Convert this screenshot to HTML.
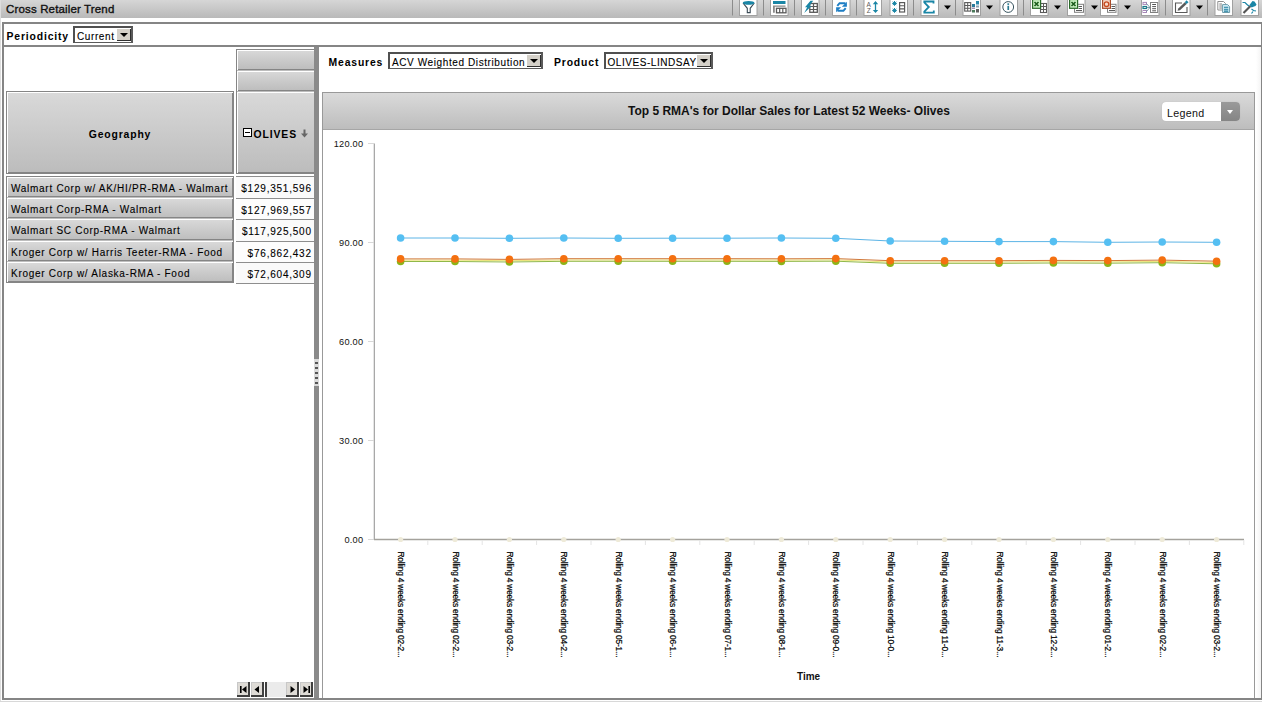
<!DOCTYPE html>
<html><head><meta charset="utf-8"><style>
*{box-sizing:border-box;margin:0;padding:0}
html,body{width:1262px;height:702px;overflow:hidden;background:#fff;font-family:"Liberation Sans",sans-serif;color:#000}
.a{position:absolute}
#title{left:0;top:0;width:1262px;height:17.6px;background:linear-gradient(#d6d6d6,#b9b9b9)}
#ttl{left:6px;top:3px;font-size:11.5px;letter-spacing:0.15px;color:#111;white-space:nowrap;-webkit-text-stroke:0.35px #111}
#lstrip{left:0;top:0;width:1px;height:702px;background:#dedede}
#frame{left:2px;top:22px;width:1260px;height:678px;border:2px solid #858585;border-right:1px solid #858585}
#perbot{left:4px;top:45px;width:1257px;height:2px;background:#858585}
.lbl{font-weight:bold;font-size:10.4px;letter-spacing:0.85px;white-space:nowrap;color:#000}
.sel{background:#fff;border:2px solid #505050;border-right-color:#5a5a5a;border-bottom:1.4px solid #5a5a5a}
.sel .t{position:absolute;left:2px;top:2.6px;font-size:10px;letter-spacing:0.6px;white-space:nowrap;color:#000;-webkit-text-stroke:0.1px #000}
.sel .b{position:absolute;top:0px;right:0px;width:15px;height:13px;background:#d4d0c8;border-left:1px solid #fff;border-top:1px solid #fff;box-shadow:inset -1px -1px 0 #303030}
.sel .b:after{content:"";position:absolute;left:3px;top:4px;border-left:4px solid transparent;border-right:4px solid transparent;border-top:4px solid #000}
#splitter{left:314px;top:47px;width:5px;height:651px;background:#8a8a8a}
.hc{background:linear-gradient(#d9d9d9,#bcbcbc);border:1px solid #858585;box-shadow:inset 1px 1px 0 #fff,inset -1px -1px 0 #858585}
.rc{background:linear-gradient(#dadada,#bdbdbd);border:1px solid #858585;box-shadow:inset 1px 1px 0 #fff,inset -1px -1px 0 #858585;font-size:10px;letter-spacing:0.72px;white-space:nowrap;color:#000;padding-left:4px;line-height:24px;-webkit-text-stroke:0.1px #000}
.vc{border-top:1px solid #8e8e8e;font-size:10px;letter-spacing:0.78px;white-space:nowrap;color:#000;text-align:right;padding-right:2.2px;line-height:23px;-webkit-text-stroke:0.1px #000}
</style></head><body>
<div id="title" class="a"></div>
<div id="ttl" class="a">Cross Retailer Trend</div>
<div id="lstrip" class="a"></div>
<svg class="a" style="left:0;top:0" width="1262" height="17" viewBox="0 0 1262 17"><line x1="732.5" y1="0" x2="732.5" y2="15.5" stroke="#8c8c8c" stroke-width="1"/><line x1="763.5" y1="0" x2="763.5" y2="15.5" stroke="#8c8c8c" stroke-width="1"/><line x1="794.5" y1="0" x2="794.5" y2="15.5" stroke="#8c8c8c" stroke-width="1"/><line x1="825.5" y1="0" x2="825.5" y2="15.5" stroke="#8c8c8c" stroke-width="1"/><line x1="856.5" y1="0" x2="856.5" y2="15.5" stroke="#8c8c8c" stroke-width="1"/><line x1="913.5" y1="0" x2="913.5" y2="15.5" stroke="#8c8c8c" stroke-width="1"/><line x1="955.5" y1="0" x2="955.5" y2="15.5" stroke="#8c8c8c" stroke-width="1"/><line x1="1023.5" y1="0" x2="1023.5" y2="15.5" stroke="#8c8c8c" stroke-width="1"/><line x1="1165.5" y1="0" x2="1165.5" y2="15.5" stroke="#8c8c8c" stroke-width="1"/><line x1="1207.5" y1="0" x2="1207.5" y2="15.5" stroke="#8c8c8c" stroke-width="1"/><rect x="739.5" y="-1" width="17.5" height="16.5" fill="#fff" stroke="#a0a0a0" stroke-width="1"/><rect x="770.5" y="-1" width="17.5" height="16.5" fill="#fff" stroke="#a0a0a0" stroke-width="1"/><rect x="801.5" y="-1" width="17.5" height="16.5" fill="#fff" stroke="#a0a0a0" stroke-width="1"/><rect x="832.5" y="-1" width="17.5" height="16.5" fill="#fff" stroke="#a0a0a0" stroke-width="1"/><rect x="864.0" y="-1" width="17.5" height="16.5" fill="#fff" stroke="#a0a0a0" stroke-width="1"/><rect x="890.0" y="-1" width="17.5" height="16.5" fill="#fff" stroke="#a0a0a0" stroke-width="1"/><rect x="921.0" y="-1" width="17.5" height="16.5" fill="#fff" stroke="#a0a0a0" stroke-width="1"/><rect x="963.0" y="-1" width="17.5" height="16.5" fill="#fff" stroke="#a0a0a0" stroke-width="1"/><rect x="1000.0" y="-1" width="17.5" height="16.5" fill="#fff" stroke="#a0a0a0" stroke-width="1"/><rect x="1030.5" y="-1" width="17.5" height="16.5" fill="#fff" stroke="#a0a0a0" stroke-width="1"/><rect x="1067.5" y="-1" width="17.5" height="16.5" fill="#fff" stroke="#a0a0a0" stroke-width="1"/><rect x="1100.5" y="-1" width="17.5" height="16.5" fill="#fff" stroke="#a0a0a0" stroke-width="1"/><rect x="1141.5" y="-1" width="17.5" height="16.5" fill="#fff" stroke="#a0a0a0" stroke-width="1"/><rect x="1172.5" y="-1" width="17.5" height="16.5" fill="#fff" stroke="#a0a0a0" stroke-width="1"/><rect x="1215.0" y="-1" width="17.5" height="16.5" fill="#fff" stroke="#a0a0a0" stroke-width="1"/><rect x="1241.0" y="-1" width="17.5" height="16.5" fill="#fff" stroke="#a0a0a0" stroke-width="1"/><path d="M944 5.5H951L947.5 9.5Z" fill="#000"/><path d="M986 5.5H993L989.5 9.5Z" fill="#000"/><path d="M1054 5.5H1061L1057.5 9.5Z" fill="#000"/><path d="M1091 5.5H1098L1094.5 9.5Z" fill="#000"/><path d="M1124 5.5H1131L1127.5 9.5Z" fill="#000"/><path d="M1196 5.5H1203L1199.5 9.5Z" fill="#000"/><path d="M743 3L747.3 8.3V12.6H750.2V8.3L754.3 3" fill="#fff" stroke="#3a4a55" stroke-width="1.1"/><ellipse cx="748.6" cy="2.8" rx="5.8" ry="1.9" fill="#1a86a6"/><rect x="773" y="1" width="12.5" height="3" fill="#1a86a6"/><path d="M773 5.5H785.5V6.8H774.8V12.8H773Z" fill="#8a8a8a"/><rect x="776.5" y="8.3" width="9.5" height="4.5" fill="none" stroke="#5a5a5a" stroke-width="1.3"/><path d="M779.7 8V13M782.8 8V13" stroke="#5a5a5a" stroke-width="1.2"/><rect x="809.8" y="3.5" width="7.5" height="8.8" fill="none" stroke="#5a5a5a" stroke-width="1.3"/><path d="M813.5 3.5V12.5M809.5 6.5H817.5M809.5 9.5H817.5" stroke="#5a5a5a" stroke-width="1.2"/><path d="M810.5 0.8H813.2L809.3 6H811.6L804.2 13L807.2 7.3H805Z" fill="#1a86a6"/><path d="M837.3 5.8L839.6 3.2H845.5" fill="none" stroke="#1e7ec4" stroke-width="2"/><path d="M846.9 1.8V6.8H841.9Z" fill="#1e7ec4"/><path d="M845.7 8.2L843.4 10.8H837.5" fill="none" stroke="#1e7ec4" stroke-width="2"/><path d="M836.1 12.2V7.2H841.1Z" fill="#1e7ec4"/><text x="866.5" y="6.8" font-size="6.5" fill="#5a5a5a" font-family="Liberation Sans">A</text><text x="866.8" y="12.8" font-size="6.5" fill="#5a5a5a" font-family="Liberation Sans">Z</text><path d="M875.5 2.5V11.5" stroke="#1a86a6" stroke-width="1.3"/><path d="M872.8 4.2L875.5 1L878.2 4.2ZM872.8 10L875.5 13L878.2 10Z" fill="#1a86a6"/><path d="M894.5 1.0V5.8M892.1 3.4H896.9M892.8 1.7L896.2 5.1M896.2 1.7L892.8 5.1" stroke="#1a86a6" stroke-width="1"/><circle cx="894.5" cy="3.4" r="1.2" fill="#1a86a6"/><path d="M894.5 8.0V12.8M892.1 10.4H896.9M892.8 8.700000000000001L896.2 12.1M896.2 8.700000000000001L892.8 12.1" stroke="#1a86a6" stroke-width="1"/><circle cx="894.5" cy="10.4" r="1.2" fill="#1a86a6"/><rect x="899.6" y="2.6" width="5" height="9.4" fill="none" stroke="#5a5a5a" stroke-width="1.2"/><path d="M899.5 5.8H904.5M899.5 8.9H904.5" stroke="#5a5a5a" stroke-width="1.1"/><path d="M933.5 3.5V1.5H924.3V2.5L928.8 7L924.3 11.5V12.6H933.8V10.5" fill="none" stroke="#1a86a6" stroke-width="1.8"/><rect x="964.7" y="2.6" width="6" height="8.5" fill="none" stroke="#5a5a5a" stroke-width="1.1"/><path d="M964.5 5.5H970.7M964.5 8.3H970.7M967.7 2.5V11" stroke="#5a5a5a" stroke-width="1"/><rect x="972" y="4" width="3" height="3" fill="#2a7a9a"/><rect x="976" y="1" width="3" height="3.5" fill="#2a88aa"/><rect x="976" y="5.5" width="3" height="2" fill="#8aa0b0"/><rect x="972" y="7.5" width="3" height="1.5" fill="#a090b0"/><rect x="972" y="10" width="3" height="2.5" fill="#4a7a5a"/><rect x="976" y="9" width="3" height="3.5" fill="#606060"/><circle cx="1008.2" cy="7" r="5.4" fill="#fff" stroke="#3a5560" stroke-width="1"/><rect x="1007.4" y="5.8" width="1.7" height="4.2" fill="#2a7a90"/><rect x="1007.4" y="3.3" width="1.7" height="1.6" fill="#2a7a90"/><rect x="1040.5" y="3.5" width="6" height="9" fill="none" stroke="#5a5a5a" stroke-width="1.1"/><path d="M1040.5 6.5H1046.5M1040.5 9.5H1046.5M1043.5 3.5V12.5" stroke="#5a5a5a" stroke-width="1"/><rect x="1032.6" y="-0.5" width="8" height="8.8" fill="#c8f0c0" stroke="#2a6a2a" stroke-width="1.2"/><path d="M1034.5 2L1038.5 6M1038.5 2L1034.5 6" stroke="#1a5a1a" stroke-width="1.6"/><rect x="1074.5" y="4.3" width="9" height="8" fill="#fff" stroke="#808080" stroke-width="1"/><path d="M1078.5 6.5H1082M1078.5 8.5H1082M1076 10.5H1082" stroke="#5a5a5a" stroke-width="1"/><rect x="1069.6" y="-0.5" width="8" height="8.8" fill="#c8f0c0" stroke="#2a6a2a" stroke-width="1.2"/><path d="M1071.5 2L1075.5 6M1075.5 2L1071.5 6" stroke="#1a5a1a" stroke-width="1.6"/><rect x="1107.5" y="4.3" width="8.5" height="8" fill="#fff" stroke="#808080" stroke-width="1"/><path d="M1111.5 6.5H1115M1111.5 8.5H1115M1109 10.5H1115" stroke="#5a5a5a" stroke-width="1"/><rect x="1102.6" y="-0.5" width="7.8" height="8.8" fill="#f8dccc" stroke="#a84a28" stroke-width="1.2"/><circle cx="1106.5" cy="4.2" r="2.3" fill="none" stroke="#c84a20" stroke-width="1.4"/><rect x="1143" y="2.4" width="3.5" height="2" fill="none" stroke="#a888b8" stroke-width="1"/><rect x="1143" y="6.5" width="3.5" height="2" fill="none" stroke="#1a7a8a" stroke-width="1.2"/><rect x="1143" y="10.5" width="3.5" height="2" fill="none" stroke="#a888b8" stroke-width="1"/><path d="M1146.5 3.5L1150 7.5M1146.5 7.5H1150M1146.5 11.5L1150 7.5" stroke="#5a8a9a" stroke-width="0.8"/><rect x="1150.5" y="2.5" width="7.2" height="10" fill="none" stroke="#808080" stroke-width="1"/><path d="M1152.2 4.5H1156M1152.2 6.6H1156M1152.2 8.7H1156M1152.2 10.8H1156" stroke="#404040" stroke-width="0.9"/><path d="M1182 3H1175.5V12.5H1187V7" fill="none" stroke="#5a5a5a" stroke-width="1.1"/><path d="M1177.5 10.8L1178.3 8.6L1184.8 2.2L1186.6 4L1180 10.3Z" fill="#5a5a5a"/><path d="M1184.8 2.2L1186.5 0.3L1188.5 2.2L1186.6 4Z" fill="#1a86a6"/><path d="M1217.8 1.5H1223.5L1225.5 3.5V10H1217.8Z" fill="#fff" stroke="#909090" stroke-width="1"/><path d="M1219.3 4H1222M1219.3 6H1222M1219.3 8H1222" stroke="#707070" stroke-width="0.9"/><path d="M1222.6 4.6H1227.5L1229.6 6.6V12.5H1222.6Z" fill="#d8f2fa" stroke="#6a9aaa" stroke-width="1"/><path d="M1224 7.3H1228.3M1224 9.2H1228.3M1224 11.1H1228.3" stroke="#1a7a9a" stroke-width="1.1"/><path d="M1242.5 2.5L1245 2.5L1247 4.5L1249.5 6.5M1251.5 9L1253.5 10.5L1256 11M1251.5 13.5L1253 11.5" stroke="#1a86a6" stroke-width="1.2" fill="none"/><path d="M1243.5 13L1250.5 6" stroke="#555" stroke-width="2.2"/><path d="M1249.5 5L1252.5 1L1254.5 1.5L1256.5 4.5L1255.5 6L1251.5 7.5Z" fill="#1a86a6"/></svg>
<div id="frame" class="a"></div>
<div class="a" style="left:0;top:701px;width:1262px;height:1px;background:#d8d8d8"></div>
<div id="perbot" class="a"></div>
<div class="a lbl" style="left:6.5px;top:31px">Periodicity</div>
<div class="a sel" style="left:73px;top:26px;width:60px;height:17px"><span class="t">Current</span><span class="b"></span></div>
<div class="a hc" style="left:236px;top:49px;width:80px;height:22px"></div>
<div class="a hc" style="left:236px;top:70px;width:80px;height:22px;border-top-color:transparent"></div>
<div class="a hc" style="left:6px;top:91px;width:228px;height:83px"></div>
<div class="a hc" style="left:236px;top:91px;width:80px;height:83px;border-top-color:transparent"></div>
<div class="a lbl" style="left:0;top:129px;width:240px;text-align:center">Geography</div>
<div class="a" style="left:243px;top:128px;width:9px;height:9px;border:1px solid #000;background:#fff"><div class="a" style="left:1px;top:3px;width:5px;height:1px;background:#000"></div></div>
<div class="a lbl" style="left:253.5px;top:129px;letter-spacing:0.9px">OLIVES</div>
<svg class="a" style="left:300px;top:129px" width="9" height="9" viewBox="0 0 9 9"><path d="M4.5 0.5V6" stroke="#666" stroke-width="2" fill="none"/><path d="M1 4.5H8L4.5 8.5Z" fill="#666"/></svg>
<div class="a rc" style="left:6px;top:176px;width:228px;height:22px">Walmart Corp w/ AK/HI/PR-RMA - Walmart</div>
<div class="a vc" style="left:236px;top:176px;width:78px;height:22px;background:#fafafa">$129,351,596</div>
<div class="a rc" style="left:6px;top:197px;width:228px;height:22px;border-top-color:transparent">Walmart Corp-RMA - Walmart</div>
<div class="a vc" style="left:236px;top:198px;width:78px;height:21px;background:#fdfdfd">$127,969,557</div>
<div class="a rc" style="left:6px;top:218px;width:228px;height:23px;border-top-color:transparent">Walmart SC Corp-RMA - Walmart</div>
<div class="a vc" style="left:236px;top:219px;width:78px;height:22px;background:#fafafa">$117,925,500</div>
<div class="a rc" style="left:6px;top:240px;width:228px;height:22px;border-top-color:transparent">Kroger Corp w/ Harris Teeter-RMA - Food</div>
<div class="a vc" style="left:236px;top:241px;width:78px;height:21px;background:#fdfdfd">$76,862,432</div>
<div class="a rc" style="left:6px;top:261px;width:228px;height:22px;border-top-color:transparent">Kroger Corp w/ Alaska-RMA - Food</div>
<div class="a vc" style="left:236px;top:262px;width:78px;height:21px;background:#fafafa">$72,604,309</div>
<div class="a" style="left:236px;top:283px;width:78px;height:1px;background:#8e8e8e"></div>
<div id="splitter" class="a"></div>
<div class="a lbl" style="left:328.5px;top:57px">Measures</div>
<div class="a sel" style="left:388px;top:52px;width:155px;height:17px"><span class="t">ACV Weighted Distribution</span><span class="b"></span></div>
<div class="a lbl" style="left:554px;top:57px">Product</div>
<div class="a sel" style="left:604px;top:52px;width:109px;height:17px"><span class="t" style="letter-spacing:0.55px;left:1.5px">OLIVES-LINDSAY</span><span class="b"></span></div>
<div class="a" style="left:322px;top:92px;width:933px;height:606px;border:1px solid #999;border-bottom:none;background:#fff"></div>
<div class="a" style="left:1256px;top:47px;width:5px;height:651px;background:linear-gradient(90deg,#fff,#f4f4f4)"></div>
<div class="a" style="left:323px;top:93px;width:931px;height:37px;background:linear-gradient(#dadada,#bdbdbd);border-bottom:1px solid #a6a6a6"></div>
<div class="a" style="left:628px;top:104px;font-size:12px;font-weight:bold;white-space:nowrap;color:#111">Top 5 RMA's for Dollar Sales for Latest 52 Weeks- Olives</div>
<div class="a" style="left:1162px;top:102px;width:78px;height:19px;border-radius:4px;background:#fff;overflow:hidden;box-shadow:0 0 1px #aaa">
 <div class="a" style="left:5px;top:4.5px;font-size:10.7px;letter-spacing:0.3px;white-space:nowrap;color:#111">Legend</div>
 <div class="a" style="left:59px;top:0;width:19px;height:19px;background:linear-gradient(#9a9a9a,#858585)"></div>
 <div class="a" style="left:65px;top:8px;border-left:3.5px solid transparent;border-right:3.5px solid transparent;border-top:4px solid #fff"></div>
</div>
<svg class="a" style="left:0;top:0" width="1262" height="702" viewBox="0 0 1262 702"><line x1="374.3" y1="143.5" x2="374.3" y2="540" stroke="#999" stroke-width="1.1"/><line x1="374" y1="539.5" x2="1244" y2="539.5" stroke="#a4a29c" stroke-width="1.4"/><line x1="368" y1="539.5" x2="374" y2="539.5" stroke="#d8d8d8" stroke-width="1"/><text x="363.3" y="542.9" text-anchor="end" font-size="9.2" letter-spacing="0.25" fill="#111">0.00</text><line x1="368" y1="440.5" x2="374" y2="440.5" stroke="#d8d8d8" stroke-width="1"/><text x="363.3" y="443.9" text-anchor="end" font-size="9.2" letter-spacing="0.25" fill="#111">30.00</text><line x1="368" y1="341.5" x2="374" y2="341.5" stroke="#d8d8d8" stroke-width="1"/><text x="363.3" y="344.9" text-anchor="end" font-size="9.2" letter-spacing="0.25" fill="#111">60.00</text><line x1="368" y1="242.5" x2="374" y2="242.5" stroke="#d8d8d8" stroke-width="1"/><text x="363.3" y="245.9" text-anchor="end" font-size="9.2" letter-spacing="0.25" fill="#111">90.00</text><line x1="368" y1="143.5" x2="374" y2="143.5" stroke="#d8d8d8" stroke-width="1"/><text x="363.3" y="146.9" text-anchor="end" font-size="9.2" letter-spacing="0.25" fill="#111">120.00</text><line x1="427.8" y1="540" x2="427.8" y2="545" stroke="#e4e4e4" stroke-width="1"/><line x1="482.2" y1="540" x2="482.2" y2="545" stroke="#e4e4e4" stroke-width="1"/><line x1="536.6" y1="540" x2="536.6" y2="545" stroke="#e4e4e4" stroke-width="1"/><line x1="591.0" y1="540" x2="591.0" y2="545" stroke="#e4e4e4" stroke-width="1"/><line x1="645.4" y1="540" x2="645.4" y2="545" stroke="#e4e4e4" stroke-width="1"/><line x1="699.8" y1="540" x2="699.8" y2="545" stroke="#e4e4e4" stroke-width="1"/><line x1="754.2" y1="540" x2="754.2" y2="545" stroke="#e4e4e4" stroke-width="1"/><line x1="808.6" y1="540" x2="808.6" y2="545" stroke="#e4e4e4" stroke-width="1"/><line x1="863.0" y1="540" x2="863.0" y2="545" stroke="#e4e4e4" stroke-width="1"/><line x1="917.4" y1="540" x2="917.4" y2="545" stroke="#e4e4e4" stroke-width="1"/><line x1="971.8" y1="540" x2="971.8" y2="545" stroke="#e4e4e4" stroke-width="1"/><line x1="1026.2" y1="540" x2="1026.2" y2="545" stroke="#e4e4e4" stroke-width="1"/><line x1="1080.6" y1="540" x2="1080.6" y2="545" stroke="#e4e4e4" stroke-width="1"/><line x1="1135.0" y1="540" x2="1135.0" y2="545" stroke="#e4e4e4" stroke-width="1"/><line x1="1189.4" y1="540" x2="1189.4" y2="545" stroke="#e4e4e4" stroke-width="1"/><line x1="1243.8" y1="540" x2="1243.8" y2="545" stroke="#e4e4e4" stroke-width="1"/><circle cx="400.6" cy="539.5" r="2.6" fill="#eeead8"/><circle cx="455.0" cy="539.5" r="2.6" fill="#eeead8"/><circle cx="509.4" cy="539.5" r="2.6" fill="#eeead8"/><circle cx="563.8" cy="539.5" r="2.6" fill="#eeead8"/><circle cx="618.2" cy="539.5" r="2.6" fill="#eeead8"/><circle cx="672.6" cy="539.5" r="2.6" fill="#eeead8"/><circle cx="727.0" cy="539.5" r="2.6" fill="#eeead8"/><circle cx="781.4" cy="539.5" r="2.6" fill="#eeead8"/><circle cx="835.8" cy="539.5" r="2.6" fill="#eeead8"/><circle cx="890.2" cy="539.5" r="2.6" fill="#eeead8"/><circle cx="944.6" cy="539.5" r="2.6" fill="#eeead8"/><circle cx="999.0" cy="539.5" r="2.6" fill="#eeead8"/><circle cx="1053.4" cy="539.5" r="2.6" fill="#eeead8"/><circle cx="1107.8" cy="539.5" r="2.6" fill="#eeead8"/><circle cx="1162.2" cy="539.5" r="2.6" fill="#eeead8"/><circle cx="1216.6" cy="539.5" r="2.6" fill="#eeead8"/><polyline points="400.6,238.0 455.0,238.0 509.4,238.3 563.8,238.0 618.2,238.3 672.6,238.2 727.0,238.2 781.4,238.0 835.8,238.3 890.2,241.0 944.6,241.3 999.0,241.6 1053.4,241.6 1107.8,242.3 1162.2,242.0 1216.6,242.3" fill="none" stroke="#5cb4e6" stroke-width="1"/><polyline points="400.6,260.2 455.0,260.2 509.4,260.7 563.8,260.0 618.2,260.0 672.6,260.0 727.0,260.0 781.4,260.1 835.8,259.9 890.2,262.0 944.6,262.0 999.0,262.0 1053.4,261.7 1107.8,261.9 1162.2,261.4 1216.6,262.5" fill="none" stroke="#ece47a" stroke-width="1"/><polyline points="400.6,261.5 455.0,261.5 509.4,262.0 563.8,261.3 618.2,261.3 672.6,261.3 727.0,261.3 781.4,261.4 835.8,261.2 890.2,263.3 944.6,263.3 999.0,263.3 1053.4,263.0 1107.8,263.2 1162.2,262.7 1216.6,263.8" fill="none" stroke="#90b848" stroke-width="1"/><polyline points="400.6,258.9 455.0,258.9 509.4,259.4 563.8,258.7 618.2,258.7 672.6,258.7 727.0,258.7 781.4,258.8 835.8,258.6 890.2,260.7 944.6,260.7 999.0,260.7 1053.4,260.4 1107.8,260.6 1162.2,260.1 1216.6,261.2" fill="none" stroke="#d0783a" stroke-width="1"/><circle cx="400.6" cy="238.0" r="3.8" fill="#55bff2"/><circle cx="455.0" cy="238.0" r="3.8" fill="#55bff2"/><circle cx="509.4" cy="238.3" r="3.8" fill="#55bff2"/><circle cx="563.8" cy="238.0" r="3.8" fill="#55bff2"/><circle cx="618.2" cy="238.3" r="3.8" fill="#55bff2"/><circle cx="672.6" cy="238.2" r="3.8" fill="#55bff2"/><circle cx="727.0" cy="238.2" r="3.8" fill="#55bff2"/><circle cx="781.4" cy="238.0" r="3.8" fill="#55bff2"/><circle cx="835.8" cy="238.3" r="3.8" fill="#55bff2"/><circle cx="890.2" cy="241.0" r="3.8" fill="#55bff2"/><circle cx="944.6" cy="241.3" r="3.8" fill="#55bff2"/><circle cx="999.0" cy="241.6" r="3.8" fill="#55bff2"/><circle cx="1053.4" cy="241.6" r="3.8" fill="#55bff2"/><circle cx="1107.8" cy="242.3" r="3.8" fill="#55bff2"/><circle cx="1162.2" cy="242.0" r="3.8" fill="#55bff2"/><circle cx="1216.6" cy="242.3" r="3.8" fill="#55bff2"/><circle cx="400.6" cy="261.5" r="3.8" fill="#8cb418"/><circle cx="455.0" cy="261.5" r="3.8" fill="#8cb418"/><circle cx="509.4" cy="262.0" r="3.8" fill="#8cb418"/><circle cx="563.8" cy="261.3" r="3.8" fill="#8cb418"/><circle cx="618.2" cy="261.3" r="3.8" fill="#8cb418"/><circle cx="672.6" cy="261.3" r="3.8" fill="#8cb418"/><circle cx="727.0" cy="261.3" r="3.8" fill="#8cb418"/><circle cx="781.4" cy="261.4" r="3.8" fill="#8cb418"/><circle cx="835.8" cy="261.2" r="3.8" fill="#8cb418"/><circle cx="890.2" cy="263.3" r="3.8" fill="#8cb418"/><circle cx="944.6" cy="263.3" r="3.8" fill="#8cb418"/><circle cx="999.0" cy="263.3" r="3.8" fill="#8cb418"/><circle cx="1053.4" cy="263.0" r="3.8" fill="#8cb418"/><circle cx="1107.8" cy="263.2" r="3.8" fill="#8cb418"/><circle cx="1162.2" cy="262.7" r="3.8" fill="#8cb418"/><circle cx="1216.6" cy="263.8" r="3.8" fill="#8cb418"/><circle cx="400.6" cy="258.9" r="3.8" fill="#f47010"/><circle cx="455.0" cy="258.9" r="3.8" fill="#f47010"/><circle cx="509.4" cy="259.4" r="3.8" fill="#f47010"/><circle cx="563.8" cy="258.7" r="3.8" fill="#f47010"/><circle cx="618.2" cy="258.7" r="3.8" fill="#f47010"/><circle cx="672.6" cy="258.7" r="3.8" fill="#f47010"/><circle cx="727.0" cy="258.7" r="3.8" fill="#f47010"/><circle cx="781.4" cy="258.8" r="3.8" fill="#f47010"/><circle cx="835.8" cy="258.6" r="3.8" fill="#f47010"/><circle cx="890.2" cy="260.7" r="3.8" fill="#f47010"/><circle cx="944.6" cy="260.7" r="3.8" fill="#f47010"/><circle cx="999.0" cy="260.7" r="3.8" fill="#f47010"/><circle cx="1053.4" cy="260.4" r="3.8" fill="#f47010"/><circle cx="1107.8" cy="260.6" r="3.8" fill="#f47010"/><circle cx="1162.2" cy="260.1" r="3.8" fill="#f47010"/><circle cx="1216.6" cy="261.2" r="3.8" fill="#f47010"/><text transform="translate(398.1,551.5) rotate(90)" font-size="8.4" fill="#000" stroke="#000" stroke-width="0.2" textLength="106" lengthAdjust="spacing">Rolling 4 weeks ending 02-2...</text><text transform="translate(452.5,551.5) rotate(90)" font-size="8.4" fill="#000" stroke="#000" stroke-width="0.2" textLength="106" lengthAdjust="spacing">Rolling 4 weeks ending 02-2...</text><text transform="translate(506.9,551.5) rotate(90)" font-size="8.4" fill="#000" stroke="#000" stroke-width="0.2" textLength="106" lengthAdjust="spacing">Rolling 4 weeks ending 03-2...</text><text transform="translate(561.3,551.5) rotate(90)" font-size="8.4" fill="#000" stroke="#000" stroke-width="0.2" textLength="106" lengthAdjust="spacing">Rolling 4 weeks ending 04-2...</text><text transform="translate(615.7,551.5) rotate(90)" font-size="8.4" fill="#000" stroke="#000" stroke-width="0.2" textLength="106" lengthAdjust="spacing">Rolling 4 weeks ending 05-1...</text><text transform="translate(670.1,551.5) rotate(90)" font-size="8.4" fill="#000" stroke="#000" stroke-width="0.2" textLength="106" lengthAdjust="spacing">Rolling 4 weeks ending 06-1...</text><text transform="translate(724.5,551.5) rotate(90)" font-size="8.4" fill="#000" stroke="#000" stroke-width="0.2" textLength="106" lengthAdjust="spacing">Rolling 4 weeks ending 07-1...</text><text transform="translate(778.9,551.5) rotate(90)" font-size="8.4" fill="#000" stroke="#000" stroke-width="0.2" textLength="106" lengthAdjust="spacing">Rolling 4 weeks ending 08-1...</text><text transform="translate(833.3,551.5) rotate(90)" font-size="8.4" fill="#000" stroke="#000" stroke-width="0.2" textLength="106" lengthAdjust="spacing">Rolling 4 weeks ending 09-0...</text><text transform="translate(887.7,551.5) rotate(90)" font-size="8.4" fill="#000" stroke="#000" stroke-width="0.2" textLength="106" lengthAdjust="spacing">Rolling 4 weeks ending 10-0...</text><text transform="translate(942.1,551.5) rotate(90)" font-size="8.4" fill="#000" stroke="#000" stroke-width="0.2" textLength="106" lengthAdjust="spacing">Rolling 4 weeks ending 11-0...</text><text transform="translate(996.5,551.5) rotate(90)" font-size="8.4" fill="#000" stroke="#000" stroke-width="0.2" textLength="106" lengthAdjust="spacing">Rolling 4 weeks ending 11-3...</text><text transform="translate(1050.9,551.5) rotate(90)" font-size="8.4" fill="#000" stroke="#000" stroke-width="0.2" textLength="106" lengthAdjust="spacing">Rolling 4 weeks ending 12-2...</text><text transform="translate(1105.3,551.5) rotate(90)" font-size="8.4" fill="#000" stroke="#000" stroke-width="0.2" textLength="106" lengthAdjust="spacing">Rolling 4 weeks ending 01-2...</text><text transform="translate(1159.7,551.5) rotate(90)" font-size="8.4" fill="#000" stroke="#000" stroke-width="0.2" textLength="106" lengthAdjust="spacing">Rolling 4 weeks ending 02-2...</text><text transform="translate(1214.1,551.5) rotate(90)" font-size="8.4" fill="#000" stroke="#000" stroke-width="0.2" textLength="106" lengthAdjust="spacing">Rolling 4 weeks ending 03-2...</text><text x="797" y="679.6" font-size="10" font-weight="bold" fill="#111">Time</text></svg>
<svg class="a" style="left:0;top:0" width="1262" height="702" viewBox="0 0 1262 702"><rect x="237" y="682" width="13" height="15" fill="#404040"/><rect x="237" y="682" width="11" height="13" fill="#c8c8c8"/><rect x="238" y="683" width="10" height="12" fill="#dedbd6"/><rect x="240" y="686" width="1.6" height="7" fill="#000"/><path d="M246.5 686V693L242 689.5Z" fill="#000"/><rect x="251" y="682" width="13" height="15" fill="#404040"/><rect x="251" y="682" width="11" height="13" fill="#c8c8c8"/><rect x="252" y="683" width="10" height="12" fill="#dedbd6"/><path d="M259 686V693L254.5 689.5Z" fill="#000"/><rect x="265" y="682" width="2" height="15" fill="#404040"/><rect x="267" y="682" width="19" height="15" fill="#ebebeb"/><rect x="286" y="682" width="13" height="15" fill="#404040"/><rect x="286" y="682" width="11" height="13" fill="#c8c8c8"/><rect x="287" y="683" width="10" height="12" fill="#dedbd6"/><path d="M290.5 686V693L295 689.5Z" fill="#000"/><rect x="300" y="682" width="13" height="15" fill="#404040"/><rect x="300" y="682" width="11" height="13" fill="#c8c8c8"/><rect x="301" y="683" width="10" height="12" fill="#dedbd6"/><path d="M303.5 686V693L308 689.5Z" fill="#000"/><rect x="308.4" y="686" width="1.6" height="7" fill="#000"/></svg>
<div class="a" style="left:314px;top:359px;width:5px;height:27px;background:#dadada"></div><div class="a" style="left:315px;top:362px;width:3px;height:2px;background:#555"></div><div class="a" style="left:315px;top:367px;width:3px;height:2px;background:#555"></div><div class="a" style="left:315px;top:372px;width:3px;height:2px;background:#555"></div><div class="a" style="left:315px;top:377px;width:3px;height:2px;background:#555"></div><div class="a" style="left:315px;top:382px;width:3px;height:2px;background:#555"></div>
</body></html>
